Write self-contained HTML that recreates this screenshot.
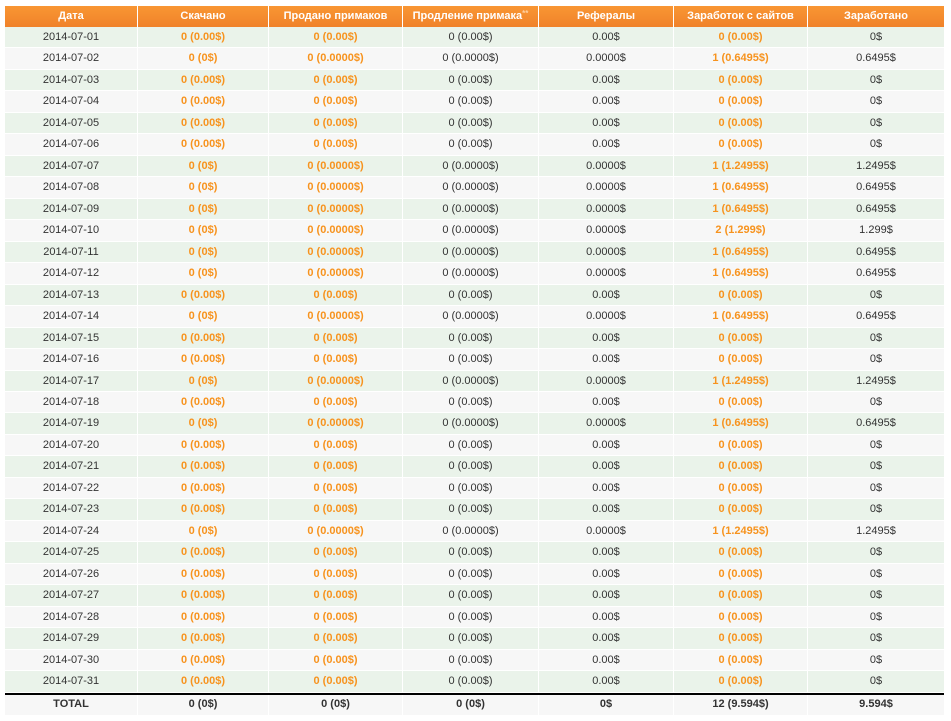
<!DOCTYPE html>
<html><head><meta charset="utf-8"><style>
body{margin:0;background:#fff;font-family:"Liberation Sans",Arial,sans-serif;font-size:11px;color:#333}
#t{position:absolute;left:5px;top:6px;width:939px}
.r{display:flex;height:21.47px;line-height:20.5px}
.r>div{box-sizing:border-box;text-align:center;border-right:1px solid #fff;border-bottom:1px solid #fff;white-space:nowrap}
.r>div:nth-child(1){width:133px}.r>div:nth-child(2){width:131px}.r>div:nth-child(3){width:134px}.r>div:nth-child(4){width:136px}.r>div:nth-child(5){width:135px}.r>div:nth-child(6){width:134px}.r>div:nth-child(7){width:136px;border-right:0}
.h{height:21px;line-height:20px;background:linear-gradient(#f99633,#f0822a);color:#fff;font-weight:bold;overflow:hidden}
.h>div{border-bottom:0!important}
.g{background:#eaf3ea}.w{background:#f7f7f7}
.o{color:#f7931e;font-weight:bold}
.tot{border-top:2px solid #000;background:#f7f7f7;font-weight:bold;height:21px;line-height:19px;margin-top:0}
.s{font-size:8px;color:#ffd0a0;position:relative;top:-3px;line-height:0}
</style></head><body><div id="t">
<div class="r h"><div>Дата</div><div>Скачано</div><div>Продано примаков</div><div>Продление примака<span class="s">**</span></div><div>Рефералы</div><div>Заработок с сайтов</div><div>Заработано</div></div>
<div class="r g"><div>2014-07-01</div><div class="o">0 (0.00$)</div><div class="o">0 (0.00$)</div><div>0 (0.00$)</div><div>0.00$</div><div class="o">0 (0.00$)</div><div>0$</div></div>
<div class="r w"><div>2014-07-02</div><div class="o">0 (0$)</div><div class="o">0 (0.0000$)</div><div>0 (0.0000$)</div><div>0.0000$</div><div class="o">1 (0.6495$)</div><div>0.6495$</div></div>
<div class="r g"><div>2014-07-03</div><div class="o">0 (0.00$)</div><div class="o">0 (0.00$)</div><div>0 (0.00$)</div><div>0.00$</div><div class="o">0 (0.00$)</div><div>0$</div></div>
<div class="r w"><div>2014-07-04</div><div class="o">0 (0.00$)</div><div class="o">0 (0.00$)</div><div>0 (0.00$)</div><div>0.00$</div><div class="o">0 (0.00$)</div><div>0$</div></div>
<div class="r g"><div>2014-07-05</div><div class="o">0 (0.00$)</div><div class="o">0 (0.00$)</div><div>0 (0.00$)</div><div>0.00$</div><div class="o">0 (0.00$)</div><div>0$</div></div>
<div class="r w"><div>2014-07-06</div><div class="o">0 (0.00$)</div><div class="o">0 (0.00$)</div><div>0 (0.00$)</div><div>0.00$</div><div class="o">0 (0.00$)</div><div>0$</div></div>
<div class="r g"><div>2014-07-07</div><div class="o">0 (0$)</div><div class="o">0 (0.0000$)</div><div>0 (0.0000$)</div><div>0.0000$</div><div class="o">1 (1.2495$)</div><div>1.2495$</div></div>
<div class="r w"><div>2014-07-08</div><div class="o">0 (0$)</div><div class="o">0 (0.0000$)</div><div>0 (0.0000$)</div><div>0.0000$</div><div class="o">1 (0.6495$)</div><div>0.6495$</div></div>
<div class="r g"><div>2014-07-09</div><div class="o">0 (0$)</div><div class="o">0 (0.0000$)</div><div>0 (0.0000$)</div><div>0.0000$</div><div class="o">1 (0.6495$)</div><div>0.6495$</div></div>
<div class="r w"><div>2014-07-10</div><div class="o">0 (0$)</div><div class="o">0 (0.0000$)</div><div>0 (0.0000$)</div><div>0.0000$</div><div class="o">2 (1.299$)</div><div>1.299$</div></div>
<div class="r g"><div>2014-07-11</div><div class="o">0 (0$)</div><div class="o">0 (0.0000$)</div><div>0 (0.0000$)</div><div>0.0000$</div><div class="o">1 (0.6495$)</div><div>0.6495$</div></div>
<div class="r w"><div>2014-07-12</div><div class="o">0 (0$)</div><div class="o">0 (0.0000$)</div><div>0 (0.0000$)</div><div>0.0000$</div><div class="o">1 (0.6495$)</div><div>0.6495$</div></div>
<div class="r g"><div>2014-07-13</div><div class="o">0 (0.00$)</div><div class="o">0 (0.00$)</div><div>0 (0.00$)</div><div>0.00$</div><div class="o">0 (0.00$)</div><div>0$</div></div>
<div class="r w"><div>2014-07-14</div><div class="o">0 (0$)</div><div class="o">0 (0.0000$)</div><div>0 (0.0000$)</div><div>0.0000$</div><div class="o">1 (0.6495$)</div><div>0.6495$</div></div>
<div class="r g"><div>2014-07-15</div><div class="o">0 (0.00$)</div><div class="o">0 (0.00$)</div><div>0 (0.00$)</div><div>0.00$</div><div class="o">0 (0.00$)</div><div>0$</div></div>
<div class="r w"><div>2014-07-16</div><div class="o">0 (0.00$)</div><div class="o">0 (0.00$)</div><div>0 (0.00$)</div><div>0.00$</div><div class="o">0 (0.00$)</div><div>0$</div></div>
<div class="r g"><div>2014-07-17</div><div class="o">0 (0$)</div><div class="o">0 (0.0000$)</div><div>0 (0.0000$)</div><div>0.0000$</div><div class="o">1 (1.2495$)</div><div>1.2495$</div></div>
<div class="r w"><div>2014-07-18</div><div class="o">0 (0.00$)</div><div class="o">0 (0.00$)</div><div>0 (0.00$)</div><div>0.00$</div><div class="o">0 (0.00$)</div><div>0$</div></div>
<div class="r g"><div>2014-07-19</div><div class="o">0 (0$)</div><div class="o">0 (0.0000$)</div><div>0 (0.0000$)</div><div>0.0000$</div><div class="o">1 (0.6495$)</div><div>0.6495$</div></div>
<div class="r w"><div>2014-07-20</div><div class="o">0 (0.00$)</div><div class="o">0 (0.00$)</div><div>0 (0.00$)</div><div>0.00$</div><div class="o">0 (0.00$)</div><div>0$</div></div>
<div class="r g"><div>2014-07-21</div><div class="o">0 (0.00$)</div><div class="o">0 (0.00$)</div><div>0 (0.00$)</div><div>0.00$</div><div class="o">0 (0.00$)</div><div>0$</div></div>
<div class="r w"><div>2014-07-22</div><div class="o">0 (0.00$)</div><div class="o">0 (0.00$)</div><div>0 (0.00$)</div><div>0.00$</div><div class="o">0 (0.00$)</div><div>0$</div></div>
<div class="r g"><div>2014-07-23</div><div class="o">0 (0.00$)</div><div class="o">0 (0.00$)</div><div>0 (0.00$)</div><div>0.00$</div><div class="o">0 (0.00$)</div><div>0$</div></div>
<div class="r w"><div>2014-07-24</div><div class="o">0 (0$)</div><div class="o">0 (0.0000$)</div><div>0 (0.0000$)</div><div>0.0000$</div><div class="o">1 (1.2495$)</div><div>1.2495$</div></div>
<div class="r g"><div>2014-07-25</div><div class="o">0 (0.00$)</div><div class="o">0 (0.00$)</div><div>0 (0.00$)</div><div>0.00$</div><div class="o">0 (0.00$)</div><div>0$</div></div>
<div class="r w"><div>2014-07-26</div><div class="o">0 (0.00$)</div><div class="o">0 (0.00$)</div><div>0 (0.00$)</div><div>0.00$</div><div class="o">0 (0.00$)</div><div>0$</div></div>
<div class="r g"><div>2014-07-27</div><div class="o">0 (0.00$)</div><div class="o">0 (0.00$)</div><div>0 (0.00$)</div><div>0.00$</div><div class="o">0 (0.00$)</div><div>0$</div></div>
<div class="r w"><div>2014-07-28</div><div class="o">0 (0.00$)</div><div class="o">0 (0.00$)</div><div>0 (0.00$)</div><div>0.00$</div><div class="o">0 (0.00$)</div><div>0$</div></div>
<div class="r g"><div>2014-07-29</div><div class="o">0 (0.00$)</div><div class="o">0 (0.00$)</div><div>0 (0.00$)</div><div>0.00$</div><div class="o">0 (0.00$)</div><div>0$</div></div>
<div class="r w"><div>2014-07-30</div><div class="o">0 (0.00$)</div><div class="o">0 (0.00$)</div><div>0 (0.00$)</div><div>0.00$</div><div class="o">0 (0.00$)</div><div>0$</div></div>
<div class="r g"><div>2014-07-31</div><div class="o">0 (0.00$)</div><div class="o">0 (0.00$)</div><div>0 (0.00$)</div><div>0.00$</div><div class="o">0 (0.00$)</div><div>0$</div></div>
<div class="r tot"><div>TOTAL</div><div>0 (0$)</div><div>0 (0$)</div><div>0 (0$)</div><div>0$</div><div>12 (9.594$)</div><div>9.594$</div></div>
</div></body></html>
